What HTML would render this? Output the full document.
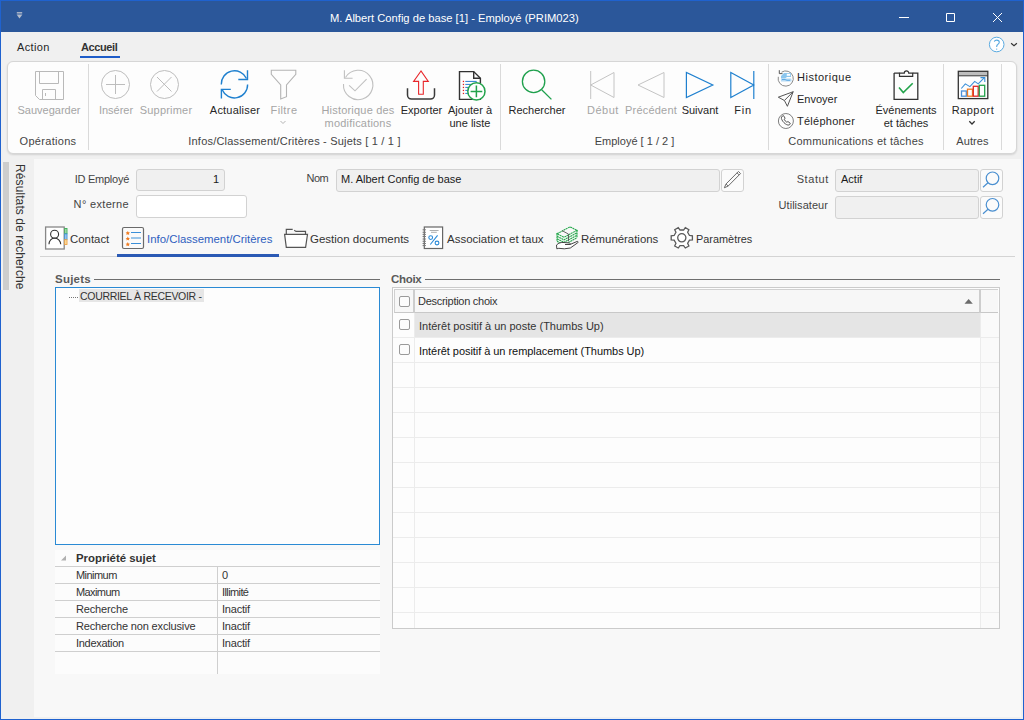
<!DOCTYPE html>
<html><head><meta charset="utf-8">
<style>
*{margin:0;padding:0;box-sizing:border-box}
html,body{width:1024px;height:720px;overflow:hidden;background:#f8f8f8;font-family:"Liberation Sans",sans-serif;font-size:11px;color:#262626}
.a{position:absolute;white-space:nowrap;line-height:13px}
.c{text-align:center}
.dis{color:#a5a5a5}
svg{position:absolute;overflow:visible}
</style></head><body>
<!-- window frame -->
<div class="a" style="left:0;top:0;width:1024px;height:720px;border:1px solid #1f62cf;background:#f8f8f8"></div>
<div class="a" style="left:1px;top:1px;width:1022px;height:31px;background:#2b579a"></div>
<div class="a" style="left:1px;top:32px;width:1022px;height:127px;background:#f0f0f0"></div>
<div class="a" style="left:1px;top:159px;width:1022px;height:560px;background:#f0f0f0"></div>
<div class="a" style="left:34px;top:159px;width:987px;height:558px;background:#f8f8f8"></div>
<!-- title -->
<svg style="left:0;top:0" width="40" height="30"><path d="M16.8 12.8h5.4" stroke="#b4bccb" stroke-width="1.4"/><path d="M16.6 14.6h5.8l-2.9 3.9z" fill="#b4bccb"/></svg>
<div class="a" style="left:330px;top:12px;font-size:11.2px;color:#fff">M. Albert Config de base [1] - Employé (PRIM023)</div>
<svg style="left:0;top:0" width="1024" height="30"><path d="M899 17.5h10M946.5 13.5h8v8h-8zM993 13l9 9M1002 13l-9 9" stroke="#fff" stroke-width="1" fill="none"/></svg>
<!-- menu -->
<div class="a" style="left:17px;top:41px;font-size:11px;letter-spacing:0.35px">Action</div>
<div class="a" style="left:81px;top:41px;font-size:11px;font-weight:bold;letter-spacing:-0.4px;color:#333">Accueil</div>
<div class="a" style="left:80px;top:56px;width:40px;height:2px;background:#1e5cc8"></div>
<svg style="left:0;top:0" width="1024" height="60"><circle cx="996.7" cy="44.5" r="7.3" stroke="#5aaae0" fill="#fff" stroke-width="1"/><path d="M994.3 41.7c.3-1 1.2-1.6 2.4-1.6 1.5 0 2.6 1 2.6 2.2 0 1.1-.8 1.6-1.6 2.2-.7.5-1 1-1 2v.6" stroke="#5aaae0" stroke-width="1.1" fill="none"/><circle cx="996.7" cy="49.1" r=".7" fill="#5aaae0"/><path d="M1011.1 43.3l2.9 2.4 2.9-2.4" stroke="#333" stroke-width="1.2" fill="none"/></svg>
<!-- ribbon -->
<div class="a" style="left:7px;top:61px;width:1010px;height:93px;background:#fdfdfd;border:1px solid #d6d6d6;border-radius:6px;box-shadow:0 1px 2px rgba(0,0,0,.13)"></div>
<div class="a" style="left:88px;top:64px;width:1px;height:86px;background:#dadada"></div>
<div class="a" style="left:500px;top:64px;width:1px;height:86px;background:#dadada"></div>
<div class="a" style="left:768px;top:64px;width:1px;height:86px;background:#dadada"></div>
<div class="a" style="left:943px;top:64px;width:1px;height:86px;background:#dadada"></div>
<div class="a" style="left:1001px;top:64px;width:1px;height:86px;background:#dadada"></div>
<!-- group labels -->
<div class="a c" style="left:8px;top:135px;width:80px;color:#444;letter-spacing:0.3px">Opérations</div>
<div class="a c" style="left:89px;top:135px;width:411px;color:#444;letter-spacing:0.2px">Infos/Classement/Critères - Sujets [ 1 / 1 ]</div>
<div class="a c" style="left:501px;top:135px;width:267px;color:#444">Employé [ 1 / 2 ]</div>
<div class="a c" style="left:769px;top:135px;width:174px;color:#444;letter-spacing:0.25px">Communications et tâches</div>
<div class="a c" style="left:944px;top:135px;width:57px;color:#444;letter-spacing:0.1px">Autres</div>
<!-- button labels -->
<div class="a c dis" style="left:9px;top:104px;width:80px">Sauvegarder</div>
<div class="a c dis" style="left:76px;top:104px;width:80px">Insérer</div>
<div class="a c dis" style="left:126px;top:104px;width:80px;letter-spacing:0.2px">Supprimer</div>
<div class="a c" style="left:195px;top:104px;width:80px;letter-spacing:0.2px">Actualiser</div>
<div class="a c dis" style="left:244px;top:104px;width:80px;letter-spacing:0.4px">Filtre</div>
<div class="a c dis" style="left:318px;top:104px;width:80px;letter-spacing:0.2px">Historique des<br>modifications</div>
<div class="a c" style="left:381.5px;top:104px;width:80px">Exporter</div>
<div class="a c" style="left:430px;top:104px;width:80px">Ajouter à<br>une liste</div>
<div class="a c" style="left:497px;top:104px;width:80px">Rechercher</div>
<div class="a c dis" style="left:563px;top:104px;width:80px;letter-spacing:0.5px">Début</div>
<div class="a c dis" style="left:611px;top:104px;width:80px;letter-spacing:0.2px">Précédent</div>
<div class="a c" style="left:660px;top:104px;width:80px">Suivant</div>
<div class="a c" style="left:703px;top:104px;width:80px;letter-spacing:0.8px">Fin</div>
<div class="a" style="left:797px;top:71px;letter-spacing:0.5px">Historique</div>
<div class="a" style="left:797px;top:93px">Envoyer</div>
<div class="a" style="left:797px;top:115px;letter-spacing:0.25px">Téléphoner</div>
<div class="a c" style="left:866px;top:104px;width:80px">Événements<br>et tâches</div>
<div class="a c" style="left:933px;top:104px;width:80px;letter-spacing:0.5px">Rapport</div>
<!-- icons -->
<svg style="left:0;top:0" width="1024" height="160" fill="none">
 <!-- save -->
 <g stroke="#b9b9b9" stroke-width="1">
  <path d="M35.5 71.5h28v28h-24l-4-4z"/><path d="M39.5 71.5v12h19v-12"/><path d="M42.5 99.5v-10h13v10"/><path d="M45.5 93v3"/>
 </g>
 <!-- insert / delete -->
 <g stroke="#bdbdbd" stroke-width="1">
  <circle cx="115.5" cy="84.5" r="14"/><path d="M106 84.5h19M115.5 75v19"/>
  <circle cx="164.5" cy="84.5" r="14"/><path d="M157 77l14.5 14.5M171.5 77L157 91.5"/>
 </g>
 <!-- refresh -->
 <g stroke="#1f80cf" stroke-width="1.4">
  <path d="M221.3 84.5A13.2 13.2 0 0 1 246.5 78.5"/><path d="M247.5 70.3v9.2h-9.2"/>
  <path d="M247.6 84.5A13.2 13.2 0 0 1 222.2 89.8"/><path d="M221.4 98.6v-9.2h9.4"/>
 </g>
 <!-- filter -->
 <path d="M271.3 70.3h24.5v4l-9.3 10.7v11.7l-5.8 2.3v-14l-9.4-10.7z" stroke="#b4b4b4" stroke-width="1.1"/>
 <path d="M280.5 121l2.5 2.5 2.5-2.5" stroke="#b4b4b4" stroke-width="1"/>
 <!-- historique modifs -->
 <g stroke="#c0c0c0" stroke-width="1.1">
  <path d="M345.5 77.5A14.7 14.7 0 1 1 343.5 84"/><path d="M344.4 70.3v8h8.2"/><path d="M349.1 85.3l5.9 5.5 11.6-11.6"/>
 </g>
 <!-- exporter -->
 <path d="M421 71l-7.4 10.4h5v12.8h4.7v-12.8h5z" stroke="#e8262a" stroke-width="1.1"/>
 <path d="M407.5 88.3v6.8a4 4 0 0 0 4 4h19a4 4 0 0 0 4-4v-6.8" stroke="#3a3a3a" stroke-width="1.5"/>
 <!-- ajouter -->
 <path d="M459.5 99.4v-27.8h14.2l6.7 6.7v21.1z" stroke="#333" stroke-width="1.4" fill="#fff"/><path d="M473.7 71.6v6.7h6.7" stroke="#333" stroke-width="1.4"/>
 <g fill="#e02020"><rect x="462.8" y="80.8" width="1.3" height="1.3"/><rect x="462.8" y="83.8" width="1.3" height="1.3"/><rect x="462.8" y="86.8" width="1.3" height="1.3"/><rect x="462.8" y="89.8" width="1.3" height="1.3"/><rect x="462.8" y="92.8" width="1.3" height="1.3"/></g>
 <path d="M465.3 81.4h11.4M465.3 84.4h8M465.3 87.4h5M465.3 90.4h4M465.3 93.4h4" stroke="#2a7fd0" stroke-width="1"/>
 <circle cx="476.4" cy="91.4" r="8.6" stroke="#22a34b" stroke-width="1.5" fill="#fff"/><path d="M470.6 91.4h11.7M476.4 85.6v11.6" stroke="#22a34b" stroke-width="1.5"/>
 <!-- rechercher -->
 <circle cx="533.6" cy="81.4" r="11.2" stroke="#1fa04d" stroke-width="1.3"/><path d="M541.7 89.7l9.7 9.7" stroke="#1fa04d" stroke-width="1.3"/>
 <!-- nav -->
 <g stroke="#c4c4c4" stroke-width="1"><path d="M590.7 71v28M614 72.5v25L590.7 85z"/><path d="M664 72.5v25L638 85z"/></g>
 <g stroke="#1f80cf" stroke-width="1.2"><path d="M686.4 72.5v25L712.8 85z"/><path d="M730.8 72.5v25L753.8 85zM753.8 71v28"/></g>
 <!-- small icons -->
 <path d="M781.5 72.2A7.6 7.6 0 1 1 778.3 76.8" stroke="#8a8a8a" stroke-width="1" fill="none"/>
 <path d="M779.3 70.2v3.4h3.2" stroke="#555" stroke-width="1" fill="none"/>
 <path d="M781 76l3-3h7v4h-4l-2 1.5h-4z" fill="#8cc6ee"/>
 <rect x="786.8" y="73.8" width="3.4" height="2" fill="#fff"/>
 <path d="M781 78.5h9.5c.8 0 1 .5 1 1.5v1.6h-10.5z" fill="#b5daf4"/>
 <path d="M782 79.5h3l2 .8h3" stroke="#4a9ee0" stroke-width=".8" fill="none"/>
 <path d="M778.3 97.2l14.9-5.5-5.8 14.6-3-5.8zM784.4 100.5l8.8-8.8" stroke="#555" stroke-width="1" fill="none" stroke-linejoin="round"/>
 <circle cx="785.9" cy="121" r="7.5" stroke="#808080" stroke-width="1" fill="none"/>
 <path d="M782.2 116.2l1.3-.6 1.6 2.6-.9 1c.4 1.2 1.5 2.5 2.7 3.1l1-.8 2.4 1.8-.6 1.3c-.8.8-2.6.6-4.4-.8-2-1.5-3.5-3.6-3.9-5.4-.2-1 .2-1.8.8-2.2z" stroke="#555" stroke-width="1" fill="#fff"/>
 <!-- evenements -->
 <path d="M894.1 73.1h5.4M912.7 73.1h5.1v26.3h-23.7v-26.3" stroke="#333" stroke-width="1.3"/>
 <path d="M899.5 73.1v3.3h13.2v-3.3h-4a2.2 2.2 0 0 0-4.4 0z" stroke="#333" stroke-width="1.2"/>
 <path d="M899 87.4l4.3 5.1 9.4-9.2" stroke="#22a34b" stroke-width="1.6"/>
 <!-- rapport -->
 <rect x="958.3" y="71.3" width="29.5" height="27.3" stroke="#333" stroke-width="1.3"/>
 <rect x="959" y="72" width="28" height="3.5" fill="#bdbdbd"/><path d="M958.3 75.8h29.5" stroke="#333" stroke-width="1"/>
 <rect x="961.5" y="91" width="4.8" height="5.2" stroke="#4a90d9" stroke-width="1.3"/>
 <rect x="967.5" y="89.2" width="5" height="7" stroke="#f07c22" stroke-width="1.3"/>
 <rect x="973.3" y="86.3" width="4.9" height="9.9" stroke="#e02828" stroke-width="1.3"/>
 <rect x="979.3" y="85.3" width="5.4" height="10.9" stroke="#22a34b" stroke-width="1.3"/>
 <path d="M961.3 88.5l4-4.6 4.6 2.7 4.8-5.2 3.5 2.5 6.2-6.2" stroke="#3a8fd8" stroke-width="1.1"/><path d="M980.5 77.6h4.3v4.3" stroke="#3a8fd8" stroke-width="1.1"/>
 <path d="M969.3 121.3l2.7 2.7 2.7-2.7" stroke="#333" stroke-width="1.3"/>
</svg>

<!-- sidebar -->
<div class="a" style="left:3px;top:162px;width:6px;height:128px;background:#cdcdcd"></div>
<div class="a" style="left:26px;top:164px;font-size:12px;color:#333;letter-spacing:0.1px;transform:rotate(90deg);transform-origin:0 0">Résultats de recherche</div>
<!-- fields -->
<div class="a" style="left:28px;top:173px;width:101px;text-align:right;color:#444;letter-spacing:-0.25px">ID Employé</div>
<div class="a" style="left:136px;top:169px;width:89px;height:22px;border:1px solid #d2d2d2;border-radius:3px;background:#f0f0f0"></div>
<div class="a" style="left:136px;top:173px;width:83px;text-align:right;color:#1a1a1a">1</div>
<div class="a" style="left:28px;top:198px;width:101px;text-align:right;color:#444;letter-spacing:0.33px">N° externe</div>
<div class="a" style="left:136px;top:195px;width:111px;height:23px;border:1px solid #d2d2d2;border-radius:3px;background:#fff"></div>
<div class="a" style="left:250px;top:172px;width:78px;text-align:right;color:#444;letter-spacing:-0.6px">Nom</div>
<div class="a" style="left:336px;top:169px;width:384px;height:23px;border:1px solid #d2d2d2;border-radius:3px;background:#f0f0f0"></div>
<div class="a" style="left:341px;top:173px;color:#1a1a1a">M. Albert Config de base</div>
<div class="a" style="left:721px;top:169px;width:23px;height:23px;border:1px solid #d2d2d2;border-radius:3px;background:#fbfbfb"></div>
<div class="a" style="left:728px;top:173px;width:101px;text-align:right;color:#444;letter-spacing:0.6px">Statut</div>
<div class="a" style="left:835px;top:169px;width:144px;height:23px;border:1px solid #d2d2d2;border-radius:3px;background:#f0f0f0"></div>
<div class="a" style="left:841px;top:173px;color:#1a1a1a">Actif</div>
<div class="a" style="left:980px;top:169px;width:23px;height:23px;border:1px solid #d2d2d2;border-radius:3px;background:#fbfbfb"></div>
<div class="a" style="left:728px;top:199px;width:100px;text-align:right;color:#444;letter-spacing:0.05px">Utilisateur</div>
<div class="a" style="left:835px;top:196px;width:144px;height:23px;border:1px solid #d2d2d2;border-radius:3px;background:#f0f0f0"></div>
<div class="a" style="left:980px;top:196px;width:23px;height:23px;border:1px solid #d2d2d2;border-radius:3px;background:#fbfbfb"></div>
<svg style="left:0;top:160px" width="1024" height="100" fill="none">
 <path transform="translate(0,-160)" d="M724.3 187.8l1.74-3.86 12.4-12.5 2.12 2.12-12.4 12.5zM726.04 183.94l2.12 2.12M737.04 172.84l2.12 2.12" stroke="#6a6a6a" stroke-width="1" fill="none" stroke-linejoin="round"/>
 <g stroke="#4a8fd0" stroke-width="1.2"><circle cx="992.5" cy="18.3" r="6.3"/><path d="M988 22.8l-5 4.5"/><circle cx="992.5" cy="44.8" r="6.3"/><path d="M988 49.3l-5 4.5"/></g>
</svg>
<!-- tabs -->
<div class="a" style="left:40px;top:256px;width:975px;height:1px;background:#d4d4d4"></div>
<div class="a" style="left:117px;top:254px;width:162px;height:3px;background:#2b5ab5"></div>
<div class="a" style="left:70px;top:233px;font-size:11.4px;color:#333">Contact</div>
<div class="a" style="left:147px;top:233px;font-size:11.4px;color:#2f5fbf">Info/Classement/Critères</div>
<div class="a" style="left:310px;top:233px;font-size:11.5px;color:#333">Gestion documents</div>
<div class="a" style="left:447px;top:233px;font-size:11.5px;color:#333">Association et taux</div>
<div class="a" style="left:581px;top:233px;font-size:11.4px;color:#333">Rémunérations</div>
<div class="a" style="left:696px;top:233px;font-size:10.9px;color:#333">Paramètres</div>
<svg style="left:0;top:0" width="1024" height="720" fill="none">
 <!-- contact -->
 <rect x="45.6" y="227" width="18.6" height="22" stroke="#888" stroke-width="1.3" fill="#fff"/>
 <rect x="64.7" y="228.5" width="2.3" height="5.2" fill="#ace0b4" stroke="#3cae55" stroke-width=".9"/>
 <rect x="64.7" y="233.9" width="2.3" height="5.6" fill="#a8cdf0" stroke="#3a8fd8" stroke-width=".9"/>
 <rect x="64.7" y="239.7" width="2.3" height="4.8" fill="#fbe2a8" stroke="#f0a040" stroke-width=".9"/>
 <circle cx="54.6" cy="234.3" r="4" stroke="#333" stroke-width="1.1" fill="none"/><path d="M49 244.3c0-3.5 2.5-6.3 5.6-6.3s6.1 2.8 6.1 6.3" stroke="#333" stroke-width="1.1" fill="none"/>
 <!-- info -->
 <rect x="122.5" y="227.5" width="21" height="21" rx="1.5" stroke="#6a6a6a" stroke-width="1.2" fill="#fafafa"/>
 <g fill="#f07c22"><path d="M127.8 230.9l.7 1.4 1.5.2-1.1 1 .3 1.5-1.4-.8-1.4.8.3-1.5-1.1-1 1.5-.2z"/><path d="M127.8 236.5l.7 1.4 1.5.2-1.1 1 .3 1.5-1.4-.8-1.4.8.3-1.5-1.1-1 1.5-.2z"/><path d="M127.8 242.1l.7 1.4 1.5.2-1.1 1 .3 1.5-1.4-.8-1.4.8.3-1.5-1.1-1 1.5-.2z"/></g>
 <path d="M131 232.5h10M131 238h10M131 243.5h10" stroke="#3a8fd8" stroke-width="1.2"/>
 <!-- folder -->
 <path d="M286.3 234.3v-5h6.4M294.2 230.3l1.8 1.1h9.5v2.9" stroke="#555" stroke-width="1.2" fill="none"/>
 <path d="M284.6 234.3h22.9l-1.9 13.1h-19.3z" stroke="#555" stroke-width="1.2" fill="#fff"/>
 <!-- association -->
 <rect x="424.3" y="227" width="18.3" height="21.5" stroke="#666" stroke-width="1.2" fill="#fff"/>
 <path d="M422.6 229.8h3.3M422.6 232.3h3.3M422.6 234.4h3.3M422.6 236.5h3.3M422.6 239h3.3M422.6 241.3h3.3M422.6 243.5h3.3M422.6 245.6h3.3" stroke="#777" stroke-width="1"/>
 <path d="M429.7 230.5h8.9M431 232.3h5.8" stroke="#999" stroke-width=".8"/>
 <path d="M430.3 244.5l7.3-9.2" stroke="#2a8ad8" stroke-width="1.1"/><circle cx="430.7" cy="237.6" r="1.9" stroke="#2a8ad8" stroke-width="1.1" fill="none"/><circle cx="437" cy="243" r="1.9" stroke="#2a8ad8" stroke-width="1.1" fill="none"/>
 <!-- remuneration -->
 <g stroke="#25a84c" stroke-width="1.1" stroke-dasharray="2 .5" fill="none">
  <path d="M557 233.8l13-7 7 3.5-13 7z"/>
  <path d="M557 236.3l7 3.5 13-7M557 238.8l7 3.5 13-7M557 241.3l7 3.5 13-7M557 233.8v7.5M577 230.3v7.5"/>
 </g>
 <path d="M562 230.6l6.5 3.5v7" stroke="#555" stroke-width=".9" fill="none"/>
 <path d="M556.5 245c2-2 4.5-2.8 7.5-2.5l5.5 .5c1 0 1 1.5 0 1.5h-4.5 5l7-3c1-.3 1.6.6 .8 1.2l-7.5 5.3-6 .8-5.5-.5-2 .5z" stroke="#444" stroke-width="1" fill="#fff"/>
<!-- gear -->
 <g transform="translate(681.8,237.8)" stroke="#5a5a5a" stroke-width="1.3" fill="#fff">
  <path d="M7.65 -2.34 L10.60 -2.06 L10.60 2.06 L7.65 2.34 L5.85 5.46 L7.09 8.15 L3.52 10.21 L1.80 7.79 L-1.80 7.79 L-3.52 10.21 L-7.09 8.15 L-5.85 5.46 L-7.65 2.34 L-10.60 2.06 L-10.60 -2.06 L-7.65 -2.34 L-5.85 -5.46 L-7.09 -8.15 L-3.52 -10.21 L-1.80 -7.79 L1.80 -7.79 L3.52 -10.21 L7.09 -8.15 L5.85 -5.46Z"/>
  <circle cx="0" cy="0" r="4.1"/>
 </g>
</svg>
<!-- Sujets -->
<div class="a" style="left:55px;top:273px;font-size:11.5px;font-weight:bold;color:#5a5a5a;letter-spacing:0.22px">Sujets</div>
<div class="a" style="left:94px;top:279px;width:286px;height:1px;background:#6e6e6e"></div>
<div class="a" style="left:55px;top:287px;width:325px;height:258px;border:1px solid #2a8ad4;background:#fdfdfd"></div>
<div class="a" style="left:69px;top:297px;width:9px;height:1px;border-top:1px dotted #777"></div>
<div class="a" style="left:79px;top:289px;width:125px;height:13px;background:#e6e6e6"></div>
<div class="a" style="left:80px;top:290px;font-size:10.5px;color:#333;letter-spacing:-0.3px">COURRIEL À RECEVOIR -</div>
<!-- properties -->
<div class="a" style="left:55px;top:550px;width:325px;height:124px;background:#fcfcfc"></div>
<svg style="left:0;top:0" width="400" height="720"><path d="M61 560.5h5v-5z" fill="#b0b0b0"/></svg>
<div class="a" style="left:76px;top:552px;font-size:11.4px;font-weight:bold;color:#333">Propriété sujet</div>
<div class="a" style="left:55px;top:566px;width:325px;height:1px;background:#cfcfcf"></div>
<div class="a" style="left:55px;top:583px;width:325px;height:1px;background:#cfcfcf"></div>
<div class="a" style="left:55px;top:600px;width:325px;height:1px;background:#cfcfcf"></div>
<div class="a" style="left:55px;top:617px;width:325px;height:1px;background:#cfcfcf"></div>
<div class="a" style="left:55px;top:634px;width:325px;height:1px;background:#cfcfcf"></div>
<div class="a" style="left:55px;top:651px;width:325px;height:1px;background:#cfcfcf"></div>
<div class="a" style="left:217px;top:566px;width:1px;height:108px;background:#cfcfcf"></div>
<div class="a" style="left:76px;top:567px;font-size:11px;color:#333;line-height:17px"><span style="letter-spacing:-0.55px">Minimum</span><br><span style="letter-spacing:-0.6px">Maximum</span><br><span style="letter-spacing:-0.15px">Recherche</span><br><span style="letter-spacing:-0.15px">Recherche non exclusive</span><br><span style="letter-spacing:-0.3px">Indexation</span></div>
<div class="a" style="left:222px;top:567px;font-size:11px;color:#333;line-height:17px">0<br><span style="letter-spacing:-0.6px">Illimité</span><br><span style="letter-spacing:-0.2px">Inactif</span><br><span style="letter-spacing:-0.2px">Inactif</span><br><span style="letter-spacing:-0.2px">Inactif</span></div>
<!-- Choix -->
<div class="a" style="left:391px;top:273px;font-size:11.5px;font-weight:bold;color:#5a5a5a;letter-spacing:-0.3px">Choix</div>
<div class="a" style="left:425px;top:279px;width:575px;height:1px;background:#6e6e6e"></div>
<div class="a" style="left:392px;top:287px;width:608px;height:342px;border:1px solid #cbcbcb;background:#fdfdfd"></div>
<div class="a" style="left:394px;top:289px;width:604px;height:24px;background:#f7f7f7;border-top:1px solid #d0d0d0;border-left:1px solid #d0d0d0;border-bottom:1px solid #c8c8c8"></div>
<div class="a" style="left:413px;top:289px;width:2px;height:24px;background:#cdcdcd"></div>
<div class="a" style="left:979px;top:289px;width:2px;height:24px;background:#cdcdcd"></div>
<div class="a" style="left:399px;top:296px;width:11px;height:11px;border:1px solid #9a9a9a;border-radius:2px;background:#fcfcfc"></div>
<div class="a" style="left:418px;top:295px;color:#333;letter-spacing:-0.27px">Description choix</div>
<svg style="left:0;top:0" width="1024" height="400"><path d="M964.5 303.8h8.3l-4.15-4.8z" fill="#6b6b6b"/></svg>
<div class="a" style="left:415px;top:313px;width:565px;height:25px;background:#e5e5e5"></div>
<div class="a" style="left:981px;top:313px;width:18px;height:315px;background:#fafafa"></div>
<div class="a" style="left:393px;top:337px;width:606px;height:1px;background:#ececec"></div>
<div class="a" style="left:393px;top:362px;width:606px;height:1px;background:#ececec"></div>
<div class="a" style="left:393px;top:387px;width:606px;height:1px;background:#ececec"></div>
<div class="a" style="left:393px;top:412px;width:606px;height:1px;background:#ececec"></div>
<div class="a" style="left:393px;top:437px;width:606px;height:1px;background:#ececec"></div>
<div class="a" style="left:393px;top:462px;width:606px;height:1px;background:#ececec"></div>
<div class="a" style="left:393px;top:487px;width:606px;height:1px;background:#ececec"></div>
<div class="a" style="left:393px;top:512px;width:606px;height:1px;background:#ececec"></div>
<div class="a" style="left:393px;top:537px;width:606px;height:1px;background:#ececec"></div>
<div class="a" style="left:393px;top:562px;width:606px;height:1px;background:#ececec"></div>
<div class="a" style="left:393px;top:587px;width:606px;height:1px;background:#ececec"></div>
<div class="a" style="left:393px;top:612px;width:606px;height:1px;background:#ececec"></div>
<div class="a" style="left:414px;top:313px;width:1px;height:315px;background:#ececec"></div>
<div class="a" style="left:980px;top:313px;width:1px;height:315px;background:#ececec"></div>
<div class="a" style="left:399px;top:319px;width:11px;height:11px;border:1px solid #9a9a9a;border-radius:2px;background:#fcfcfc"></div>
<div class="a" style="left:399px;top:344px;width:11px;height:11px;border:1px solid #9a9a9a;border-radius:2px;background:#fcfcfc"></div>
<div class="a" style="left:419px;top:320px;color:#333">Intérêt positif à un poste (Thumbs Up)</div>
<div class="a" style="left:419px;top:345px;color:#111;letter-spacing:-0.05px">Intérêt positif à un remplacement (Thumbs Up)</div>
</body></html>
